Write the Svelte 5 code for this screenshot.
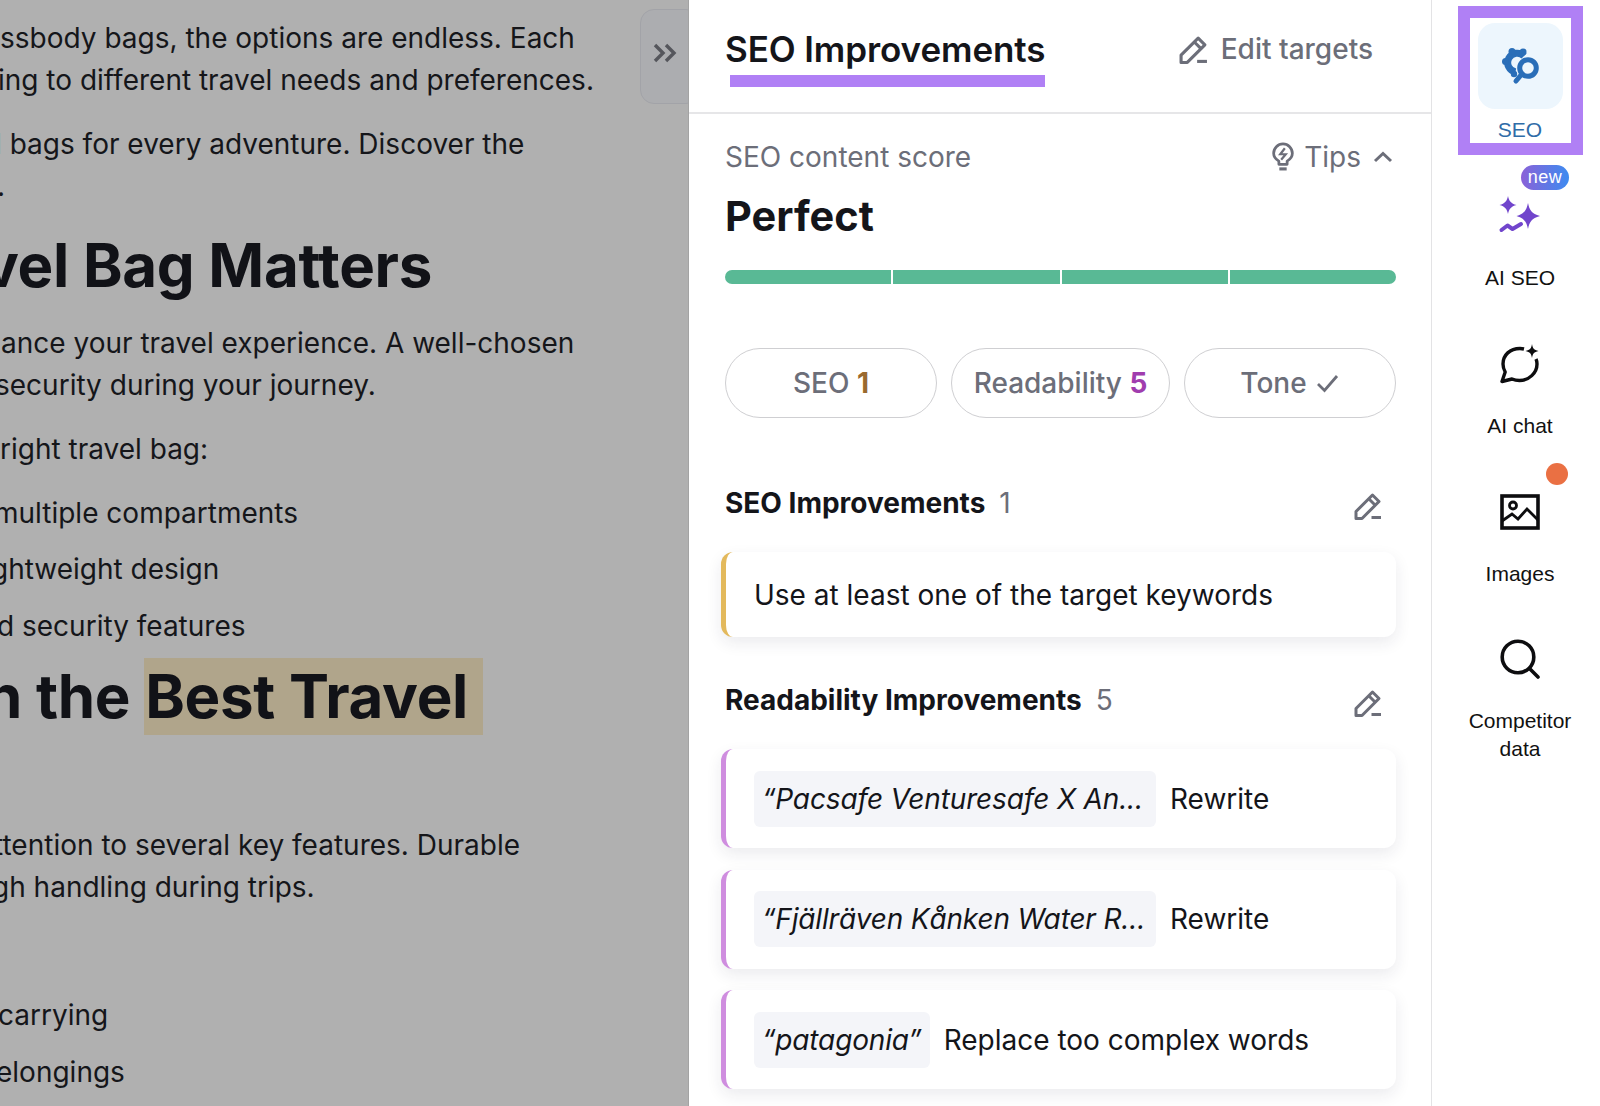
<script>
  // left article is cropped by the panel, so every line keeps its own start offset
  const article = [
    { kind: 'p', lines: [
      { text: 'ssbody bags, the options are endless. Each', x: 0 },
      { text: 'ing to different travel needs and preferences.', x: -2 }
    ] },
    { kind: 'p', lines: [
      { text: 'l bags for every adventure. Discover the', x: -5 },
      { text: '.', x: -3 }
    ] },
    { kind: 'h2', lines: [{ text: 'vel Bag Matters', x: -17 }] },
    { kind: 'p', lines: [
      { text: 'ance your travel experience. A well-chosen', x: 1 },
      { text: 'security during your journey.', x: -5 }
    ] },
    { kind: 'p', lines: [{ text: 'right travel bag:', x: 0 }] },
    { kind: 'li', lines: [{ text: 'multiple compartments', x: -6 }] },
    { kind: 'li', lines: [{ text: 'ghtweight design', x: -9 }] },
    { kind: 'li', lines: [{ text: 'd security features', x: -3 }] },
    { kind: 'h2 mark-row', lines: [{ text: 'n the ', mark: 'Best Travel', x: -15 }] },
    { kind: 'p after-h', lines: [
      { text: 'ttention to several key features. Durable', x: -6 },
      { text: 'gh handling during trips.', x: -8 }
    ] },
    { kind: 'li first', lines: [{ text: 'carrying', x: -2 }] },
    { kind: 'li', lines: [{ text: 'elongings', x: -4 }] }
  ];

  const rewrites = [
    { quote: '“Pacsafe Venturesafe X An...', action: 'Rewrite', cut: true },
    { quote: '“Fjällräven Kånken Water R...', action: 'Rewrite', cut: true },
    { quote: '“patagonia”', action: 'Replace too complex words', cut: false }
  ];
</script>

{#snippet pencil(size)}
  <svg width={size} height={size} viewBox="0 0 28 28" fill="none" stroke="currentColor" stroke-width="3">
    <path d="M2 26.500v-7L18.500 3l6.500 6.500-17 17z" stroke-linejoin="round" />
    <path d="M15 7l6 6" />
    <path d="M17.500 25.500H27" />
  </svg>
{/snippet}

<div class="page">
  <section class="doc">
    {#each article as block}
      <div class={block.kind}>
        {#each block.lines as line}
          <div class="line" style="margin-left: {line.x}px">{line.text}{#if line.mark}<mark>{line.mark}</mark>{/if}</div>
        {/each}
      </div>
    {/each}
    <button class="collapse" aria-label="Collapse">
      <svg width="24" height="20" viewBox="0 0 24 20" fill="none" stroke="#55565c" stroke-width="3.400">
        <path d="M2 2l8 8-8 8" />
        <path d="M13 2l8 8-8 8" />
      </svg>
    </button>
  </section>

  <main class="panel">
    <header class="tabs">
      <div class="tab"><span>SEO Improvements</span></div>
      <div class="edit">{@render pencil(29)}<span>Edit targets</span></div>
    </header>

    <div class="body">
      <div class="score-row">
        <span>SEO content score</span>
        <span class="tips">
          <svg width="22" height="30" viewBox="0 0 24 32" fill="none" stroke="currentColor" stroke-width="3">
            <path d="M7.500 24v-3.500C4 18.500 1.800 15.500 1.800 12a10.200 10.200 0 0 1 20.400 0c0 3.500-2.200 6.500-5.700 8.500V24z" stroke-linejoin="round" />
            <path d="M14 6.500L9 13h6l-5 6" stroke-width="2.400" />
            <path d="M8 29h8" stroke-width="3.400" />
          </svg>
          <span>Tips</span>
          <svg class="chev" width="20" height="12" viewBox="0 0 20 12" fill="none" stroke="currentColor" stroke-width="3">
            <path d="M2 10l8-7.500 8 7.500" />
          </svg>
        </span>
      </div>
      <h1>Perfect</h1>
      <div class="bar"><i></i><i></i><i></i><i></i></div>

      <div class="pills">
        <div class="pill">SEO <b class="amber">1</b></div>
        <div class="pill">Readability <b class="violet">5</b></div>
        <div class="pill tone"><span>Tone</span>
          <svg width="24" height="20" viewBox="0 0 24 20" fill="none" stroke="currentColor" stroke-width="2.800">
            <path d="M2 11l6.500 6.500L21 3" />
          </svg>
        </div>
      </div>

      <div class="group-head first-group">
        <h2>SEO Improvements</h2><span class="count">1</span>
        <span class="group-edit">{@render pencil(28)}</span>
      </div>
      <div class="card yellow"><span>Use at least one of the target keywords</span></div>

      <div class="group-head">
        <h2>Readability Improvements</h2><span class="count">5</span>
        <span class="group-edit">{@render pencil(28)}</span>
      </div>
      {#each rewrites as item}
        <div class="card pink">
          <span class="chip" class:cut={item.cut}>{item.quote}</span>
          <span>{item.action}</span>
        </div>
      {/each}
    </div>
  </main>

  <aside class="rail">
    <div class="focus"></div>
    <div class="item active">
      <div class="icon">
        <svg width="40" height="38" viewBox="0 0 40 38" fill="none" stroke="#2a6eb8">
          <path d="M24 9A9.500 9.500 0 1 0 15.500 25" stroke-width="7" />
          <g fill="#2a6eb8" stroke="none">
            <circle cx="5.500" cy="14.500" r="3.500" />
            <circle cx="12" cy="4.500" r="3.500" />
            <circle cx="23" cy="5" r="3.500" />
            <circle cx="14" cy="27" r="3.200" />
          </g>
          <circle cx="28" cy="21" r="8.300" stroke-width="5" />
          <path d="M21 28l-5 6" stroke-width="5" stroke-linecap="round" />
        </svg>
      </div>
      <span class="label">SEO</span>
    </div>

    <div class="item">
      <span class="new">new</span>
      <div class="icon">
        <svg width="44" height="38" viewBox="0 0 44 38" fill="#7145cc">
          <path d="M10 1c1 5 3 7.500 8.500 9C13 11.500 11 14 10 19c-1-5-3-7.500-8.500-9C7 8.500 9 6 10 1z" />
          <path d="M30 8c1.500 7 3.500 10.500 12 13-8.500 2.500-10.500 6-12 13-1.500-7-3.500-10.500-11.500-13C26.500 18.500 28.500 15 30 8z" />
          <path d="M3.500 35l6-4.500 5 3.500 8.500-5" fill="none" stroke="#7145cc" stroke-width="4" stroke-linecap="round" stroke-linejoin="round" />
        </svg>
      </div>
      <span class="label">AI SEO</span>
    </div>

    <div class="item">
      <div class="icon low">
        <svg width="40" height="40" viewBox="0 0 40 40" fill="none" stroke="#0d0d0f" stroke-width="3.400">
          <path d="M24 5a17 17 0 0 0-4-.5C10 4.500 3 11 3 20c0 3 .8 5.500 2.200 8L2 37.500l10-2.500c2.300 1 5 1.500 7.500 1.500C29 36.500 37 29 37 20c0-2-.3-3.500-1-5" stroke-linejoin="round" />
          <path fill="#0d0d0f" stroke="none" d="M32 0c.7 4.500 2 6 6.500 7-4.500 1-5.800 2.500-6.500 7-.7-4.500-2-6-6.500-7C30 6 31.300 4.500 32 0z" />
        </svg>
      </div>
      <span class="label">AI chat</span>
    </div>

    <div class="item">
      <span class="dot"></span>
      <div class="icon low">
        <svg width="40" height="36" viewBox="0 0 40 36" fill="none" stroke="#0d0d0f" stroke-width="3.600">
          <rect x="2" y="2" width="36" height="32" />
          <circle cx="13" cy="11.500" r="3.500" stroke-width="2.800" />
          <path d="M2 27l10-7 6 5 9-10 11 11" stroke-width="2.800" />
        </svg>
      </div>
      <span class="label">Images</span>
    </div>

    <div class="item">
      <div class="icon low">
        <svg width="40" height="40" viewBox="0 0 40 40" fill="none" stroke="#0d0d0f" stroke-width="3.600">
          <circle cx="18" cy="18" r="15.800" />
          <path d="M29.500 29.500l8.500 8.500" stroke-linecap="round" />
        </svg>
      </div>
      <span class="label">Competitor<br />data</span>
    </div>
  </aside>
</div>

<style>
  :global(body) {
    margin: 0;
    background: #fff;
  }

  .page {
    display: flex;
    width: 1600px;
    height: 1106px;
    overflow: hidden;
    font-family: Inter, "Liberation Sans", sans-serif;
    color: #14151a;
  }

  /* dimmed article */
  .doc {
    position: relative;
    flex: 0 0 689px;
    box-sizing: border-box;
    padding-top: 17px;
    overflow: hidden;
    background: #b0b0b0;
    border-right: 1px solid #a3a3a3;
    font-size: 28px;
    line-height: 42px;
    color: #15161a;
    white-space: pre;
  }

  .p {
    margin-bottom: 22px;
  }

  .h2 {
    margin-top: 24px;
    margin-bottom: 22.500px;
    font-size: 60px;
    line-height: 68px;
    font-weight: 700;
    letter-spacing: -0.3px;
    color: #111217;
  }

  .li {
    margin-bottom: 14.500px;
  }

  .li.first {
    margin-top: 86px;
  }

  .mark-row {
    margin-top: -3px;
    margin-bottom: 89px;
    line-height: 77px;
  }

  mark {
    display: inline-block;
    padding: 0 15px 0 1px;
    background: #b0a58b;
    color: inherit;
  }

  .collapse {
    position: absolute;
    top: 9px;
    left: 640px;
    width: 60px;
    height: 95px;
    padding: 0 0 8px 12px;
    text-align: left;
    background: #acadb0;
    border: 1.500px solid #a2a3a8;
    border-radius: 14px;
  }

  .collapse svg {
    display: block;
  }

  /* main panel */
  .panel {
    flex: 0 0 743px;
    box-sizing: border-box;
    height: 1106px;
    overflow: hidden;
    background: #fff;
    border-right: 1.500px solid #e3e3e5;
  }

  .tabs {
    display: flex;
    align-items: flex-start;
    justify-content: space-between;
    height: 114px;
    box-sizing: border-box;
    padding: 0 58px 0 41px;
    border-bottom: 2px solid #e6e6e8;
  }

  .tab {
    width: 315px;
    height: 87px;
    box-sizing: border-box;
    border-bottom: 12px solid #b080f5;
  }

  .tab span {
    display: block;
    margin-left: -5px;
    padding-top: 29px;
    font-size: 35px;
    line-height: 40px;
    font-weight: 600;
    letter-spacing: -0.1px;
    white-space: nowrap;
  }

  .edit {
    display: flex;
    align-items: center;
    gap: 13px;
    padding-top: 29px;
    font-size: 28px;
    line-height: 40px;
    font-weight: 500;
    color: #6c6e79;
  }

  .body {
    padding: 0 35px 0 36px;
  }

  .score-row {
    display: flex;
    justify-content: space-between;
    align-items: center;
    height: 40px;
    margin-top: 23px;
    font-size: 28px;
    color: #6c6e79;
  }

  .tips {
    display: flex;
    align-items: center;
    gap: 10px;
    padding-right: 3px;
  }

  .chev {
    margin-left: 2px;
  }

  h1 {
    margin: 13px 0 0;
    font-size: 41.500px;
    line-height: 52px;
    font-weight: 700;
  }

  .bar {
    display: flex;
    gap: 2px;
    height: 14px;
    margin-top: 28px;
    border-radius: 7px;
    overflow: hidden;
  }

  .bar i {
    flex: 1;
    background: #59b995;
  }

  .pills {
    display: flex;
    gap: 14px;
    margin-top: 64px;
  }

  .pill {
    flex: 1 1 auto;
    display: flex;
    align-items: center;
    justify-content: center;
    height: 70px;
    box-sizing: border-box;
    border: 1.500px solid #cfcfd2;
    border-radius: 35px;
    font-size: 28px;
    font-weight: 500;
    color: #6c6e79;
    white-space: pre;
  }

  .pill:nth-child(1),
  .pill:nth-child(3) {
    flex: 0 0 212px;
  }

  .tone {
    gap: 9px;
  }

  .pill b {
    font-weight: 700;
  }

  .amber {
    color: #9a6a2f;
  }

  .violet {
    color: #a03dae;
  }

  .group-head {
    display: flex;
    align-items: center;
    height: 40px;
    margin-top: 43px;
    margin-bottom: 29px;
  }

  .first-group {
    margin-top: 65px;
  }

  .group-head h2 {
    margin: 0;
    font-size: 28px;
    font-weight: 700;
  }

  .count {
    margin-left: 14px;
    font-size: 28px;
    color: #6c6e79;
  }

  .group-edit {
    display: flex;
    margin-left: auto;
    margin-right: 14px;
    margin-top: 6px;
    color: #6c6e79;
  }

  .card {
    display: flex;
    align-items: center;
    gap: 14px;
    height: 99px;
    box-sizing: border-box;
    margin-left: -4px;
    margin-bottom: 21.500px;
    padding-left: 28px;
    background: #fff;
    border-left: 5px solid;
    border-radius: 12px;
    box-shadow: 0 6px 16px rgba(30, 35, 70, 0.09);
    font-size: 28px;
    white-space: nowrap;
  }

  .yellow {
    height: 85px;
    border-left-color: #e3b95c;
  }

  .pink {
    border-left-color: #cf8ddf;
  }

  .chip {
    box-sizing: border-box;
    height: 56px;
    line-height: 56px;
    padding: 0 8px;
    background: #f4f5f9;
    border-radius: 6px;
    font-style: italic;
    letter-spacing: -0.15px;
  }

  .chip.cut {
    width: 402px;
  }

  /* right rail */
  .rail {
    position: relative;
    flex: 1;
    display: flex;
    flex-direction: column;
    padding: 23px 0 0 8px;
    font-family: "Liberation Sans", Arial, sans-serif;
  }

  .focus {
    position: absolute;
    top: 6px;
    left: 26px;
    width: 125px;
    height: 149px;
    box-sizing: border-box;
    border: 12px solid #b080f5;
  }

  .item {
    position: relative;
    display: flex;
    flex-direction: column;
    align-items: center;
    height: 148px;
  }

  .icon {
    display: flex;
    align-items: center;
    justify-content: center;
    width: 85px;
    height: 86px;
    border-radius: 17px;
  }

  .icon.low svg {
    margin-top: 3px;
  }

  .active .icon {
    background: #edf6fd;
  }

  .label {
    margin-top: 7px;
    font-size: 21px;
    line-height: 28px;
    text-align: center;
    color: #111;
  }

  .active .label {
    color: #2f6ca8;
  }

  .new {
    position: absolute;
    top: -6px;
    left: 81px;
    width: 48px;
    height: 25px;
    border-radius: 13px;
    background: linear-gradient(90deg, #8a62d8, #3d8bf0);
    color: #fff;
    font-size: 18px;
    line-height: 24px;
    letter-spacing: 0.5px;
    text-align: center;
  }

  .dot {
    position: absolute;
    top: -4px;
    left: 106px;
    width: 22px;
    height: 22px;
    border-radius: 50%;
    background: #ea7043;
  }
</style>
